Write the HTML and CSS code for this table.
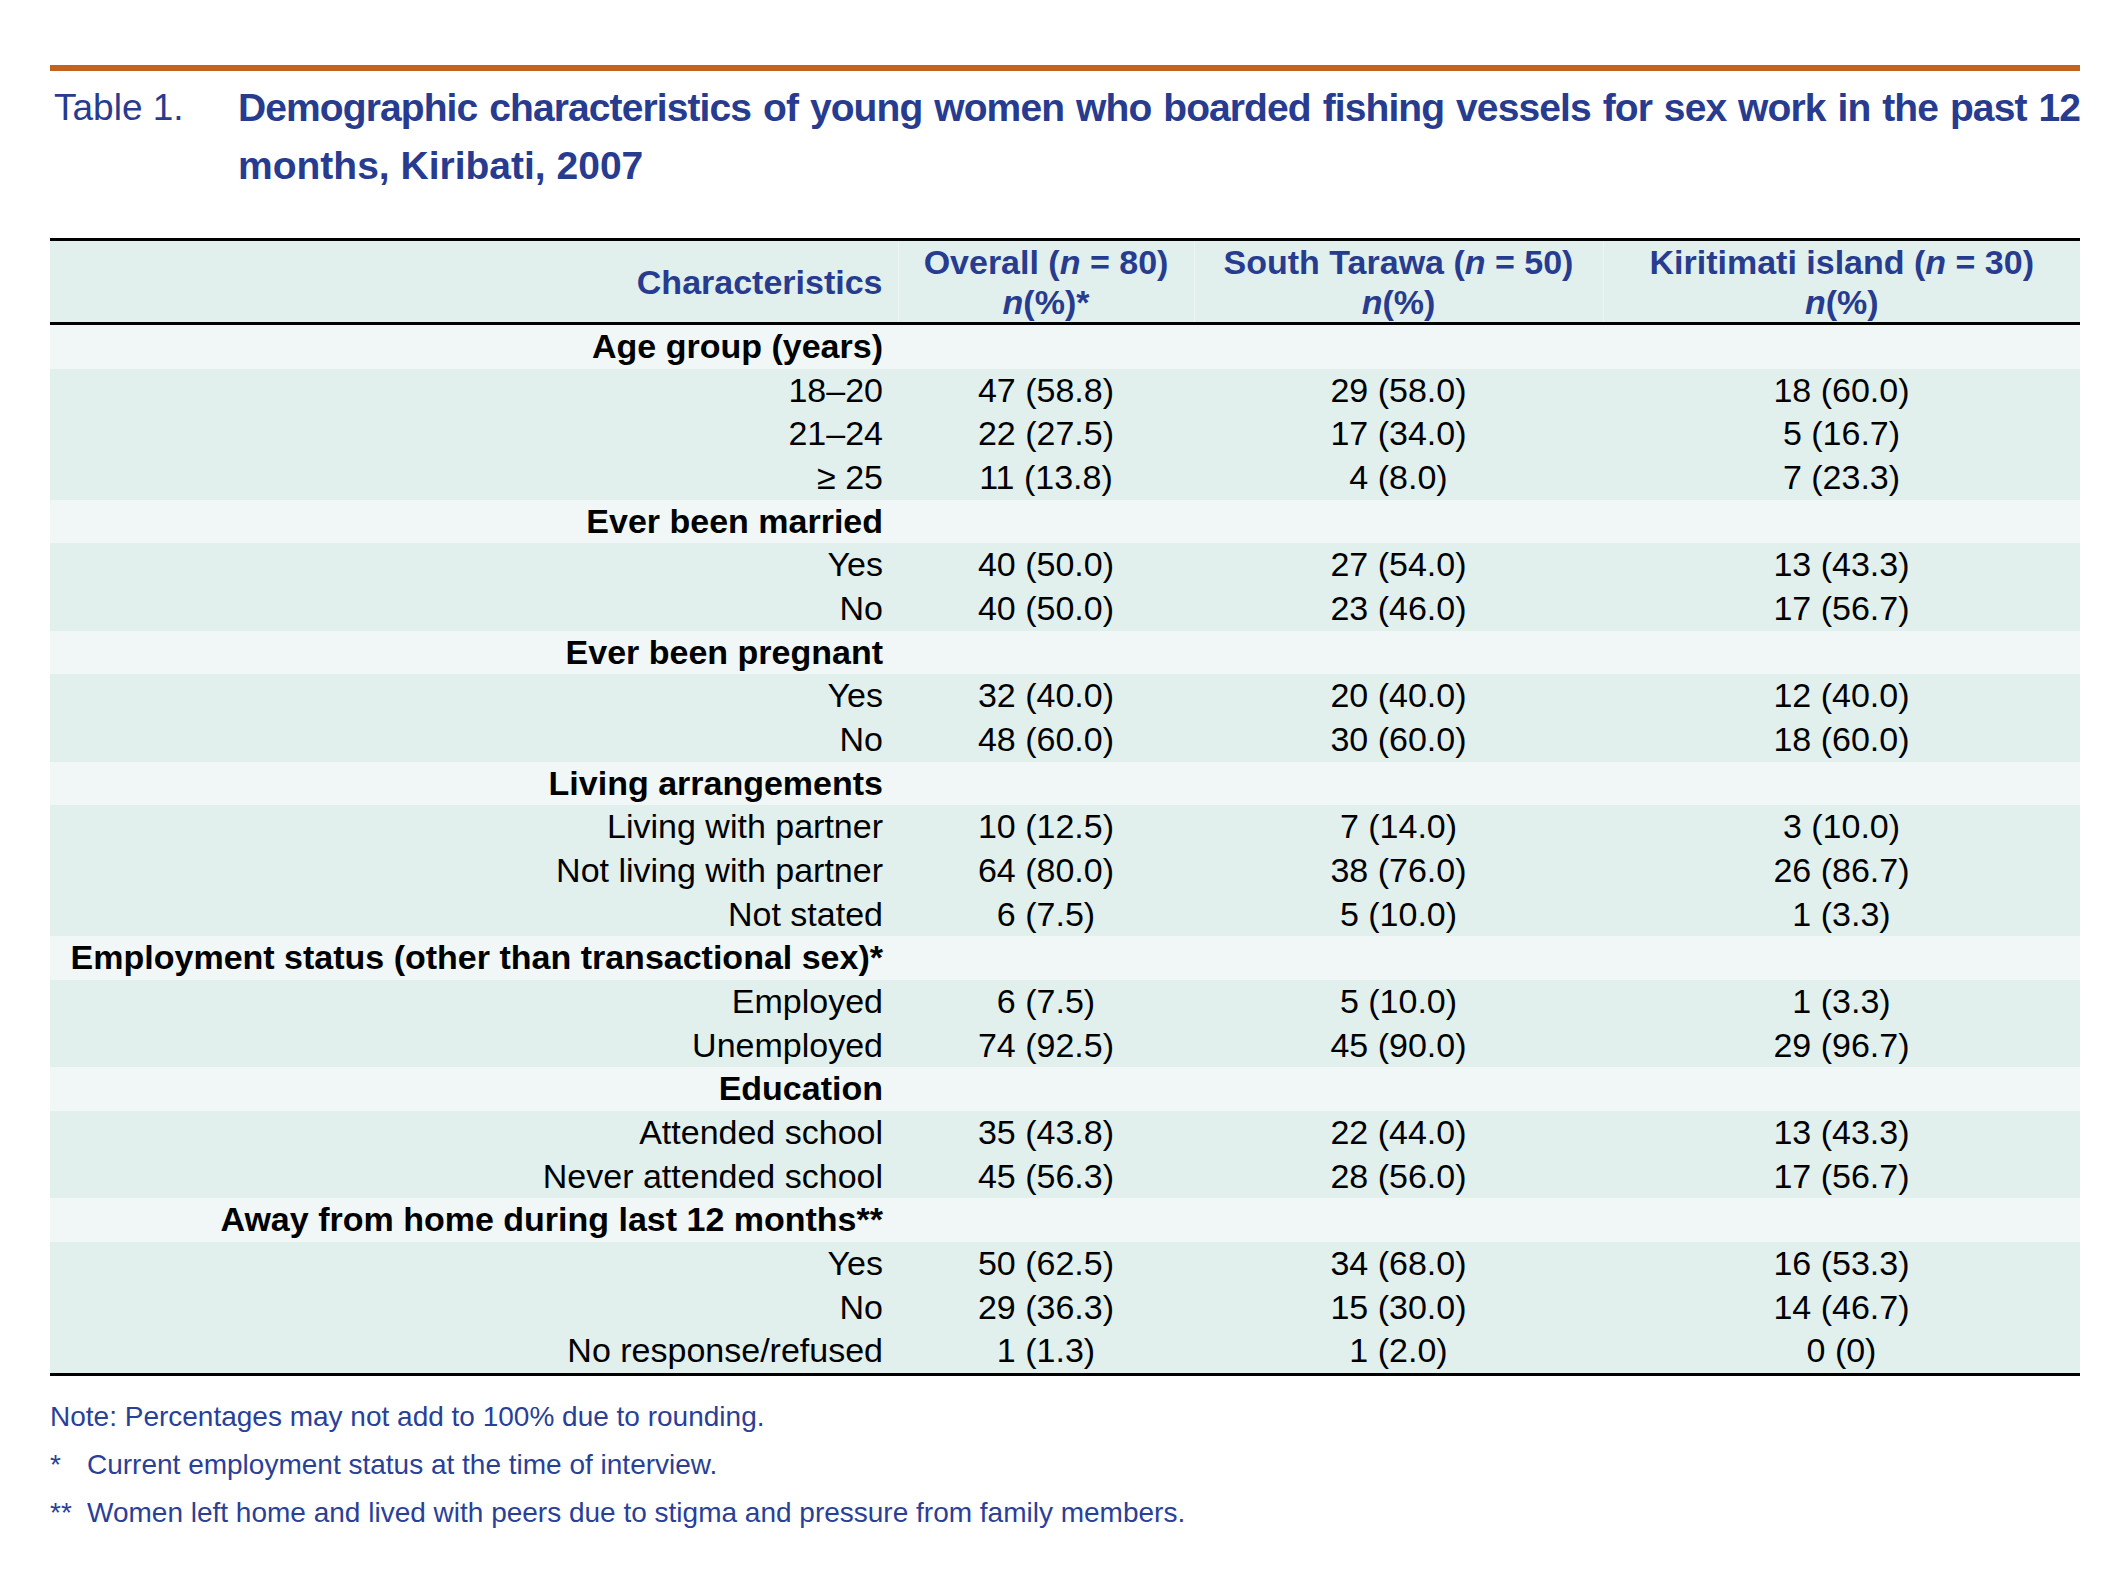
FILE: index.html
```html
<!DOCTYPE html>
<html lang="en">
<head>
<meta charset="utf-8">
<title>Table 1</title>
<link rel="stylesheet" href="styles.css">
</head>
<body>
<div class="page">
  <div class="rule"></div>
  <div class="caption">
    <div class="cap-label">Table 1.</div>
    <div class="cap-title">
      <span class="cap-line1">Demographic characteristics of young women who boarded fishing vessels for sex work in the past 12</span>
      <span class="cap-line2">months, Kiribati, 2007</span>
    </div>
  </div>
  <table class="data">
    <colgroup>
      <col class="c-label">
      <col class="c-overall">
      <col class="c-st">
      <col class="c-kiri">
    </colgroup>
    <thead>
      <tr>
        <th class="lab">Characteristics</th>
        <th>Overall (<i>n</i> = 80)<br><i>n</i>(%)*</th>
        <th>South Tarawa (<i>n</i> = 50)<br><i>n</i>(%)</th>
        <th>Kiritimati island (<i>n</i> = 30)<br><i>n</i>(%)</th>
      </tr>
    </thead>
    <tbody>
      <tr class="grp"><td>Age group (years)</td><td></td><td></td><td></td></tr>
      <tr><td>18–20</td><td>47 (58.8)</td><td>29 (58.0)</td><td>18 (60.0)</td></tr>
      <tr><td>21–24</td><td>22 (27.5)</td><td>17 (34.0)</td><td>5 (16.7)</td></tr>
      <tr><td>≥ 25</td><td>11 (13.8)</td><td>4 (8.0)</td><td>7 (23.3)</td></tr>
      <tr class="grp"><td>Ever been married</td><td></td><td></td><td></td></tr>
      <tr><td>Yes</td><td>40 (50.0)</td><td>27 (54.0)</td><td>13 (43.3)</td></tr>
      <tr><td>No</td><td>40 (50.0)</td><td>23 (46.0)</td><td>17 (56.7)</td></tr>
      <tr class="grp"><td>Ever been pregnant</td><td></td><td></td><td></td></tr>
      <tr><td>Yes</td><td>32 (40.0)</td><td>20 (40.0)</td><td>12 (40.0)</td></tr>
      <tr><td>No</td><td>48 (60.0)</td><td>30 (60.0)</td><td>18 (60.0)</td></tr>
      <tr class="grp"><td>Living arrangements</td><td></td><td></td><td></td></tr>
      <tr><td>Living with partner</td><td>10 (12.5)</td><td>7 (14.0)</td><td>3 (10.0)</td></tr>
      <tr><td>Not living with partner</td><td>64 (80.0)</td><td>38 (76.0)</td><td>26 (86.7)</td></tr>
      <tr><td>Not stated</td><td>6 (7.5)</td><td>5 (10.0)</td><td>1 (3.3)</td></tr>
      <tr class="grp"><td>Employment status (other than transactional sex)*</td><td></td><td></td><td></td></tr>
      <tr><td>Employed</td><td>6 (7.5)</td><td>5 (10.0)</td><td>1 (3.3)</td></tr>
      <tr><td>Unemployed</td><td>74 (92.5)</td><td>45 (90.0)</td><td>29 (96.7)</td></tr>
      <tr class="grp"><td>Education</td><td></td><td></td><td></td></tr>
      <tr><td>Attended school</td><td>35 (43.8)</td><td>22 (44.0)</td><td>13 (43.3)</td></tr>
      <tr><td>Never attended school</td><td>45 (56.3)</td><td>28 (56.0)</td><td>17 (56.7)</td></tr>
      <tr class="grp"><td>Away from home during last 12 months**</td><td></td><td></td><td></td></tr>
      <tr><td>Yes</td><td>50 (62.5)</td><td>34 (68.0)</td><td>16 (53.3)</td></tr>
      <tr><td>No</td><td>29 (36.3)</td><td>15 (30.0)</td><td>14 (46.7)</td></tr>
      <tr><td>No response/refused</td><td>1 (1.3)</td><td>1 (2.0)</td><td>0 (0)</td></tr>
    </tbody>
  </table>
  <div class="notes">
    <p class="note">Note: Percentages may not add to 100% due to rounding.</p>
    <p class="note"><span class="mark">*</span>Current employment status at the time of interview.</p>
    <p class="note"><span class="mark">**</span>Women left home and lived with peers due to stigma and pressure from family members.</p>
  </div>
</div>
</body>
</html>
```

FILE: styles.css
```css
html, body {
  margin: 0;
  padding: 0;
  background: #ffffff;
}

body {
  font-family: "Liberation Sans", Arial, sans-serif;
  color: #000000;
}

.page {
  width: 2030px;
  margin-left: 50px;
  padding-top: 65px;
}

.rule {
  height: 6px;
  background: #c1621f;
}

.caption {
  display: flex;
  margin-top: 8px;
  color: #283c8f;
}

.cap-label {
  width: 188px;
  flex: none;
  font-size: 37px;
  line-height: 58px;
  padding-left: 4px;
  box-sizing: border-box;
}

.cap-title {
  flex: 1;
  min-width: 0;
  font-size: 39px;
  font-weight: bold;
  line-height: 58px;
}

.cap-line1 {
  display: block;
  text-align: justify;
  text-align-last: justify;
  white-space: nowrap;
  letter-spacing: -0.9px;
}

.cap-line2 {
  display: block;
}

.data {
  margin-top: 43px;
  width: 2030px;
  border-collapse: collapse;
  table-layout: fixed;
  font-size: 34px;
}

.c-label { width: 848px; }
.c-overall { width: 296px; }
.c-st { width: 409px; }
.c-kiri { width: 477px; }

.data thead tr {
  border-top: 3px solid #000;
  border-bottom: 3px solid #000;
  background: #e1f0ed;
}

.data th {
  color: #283c8f;
  font-weight: bold;
  line-height: 40px;
  padding: 1px 0 0 0;
  height: 80px;
  text-align: center;
  vertical-align: middle;
  border-left: 1px solid #ecf6f4;
}

.data th.lab {
  text-align: right;
  padding-right: 15px;
  border-left: none;
}

.data td {
  height: 43.67px;
  line-height: 43.67px;
  padding: 0;
  text-align: center;
  white-space: nowrap;
}

.data td:first-child {
  text-align: right;
  padding-right: 15px;
}

.data tbody tr {
  background: #e1f0ed;
}

.data tbody tr.grp {
  background: #f0f7f6;
  font-weight: bold;
}

.data tbody tr:last-child {
  border-bottom: 3px solid #000;
}

.notes {
  margin-top: 17px;
  color: #2a3f98;
  font-size: 28px;
}

.note {
  margin: 0;
  line-height: 48px;
}

.mark {
  display: inline-block;
  width: 37px;
}
```
